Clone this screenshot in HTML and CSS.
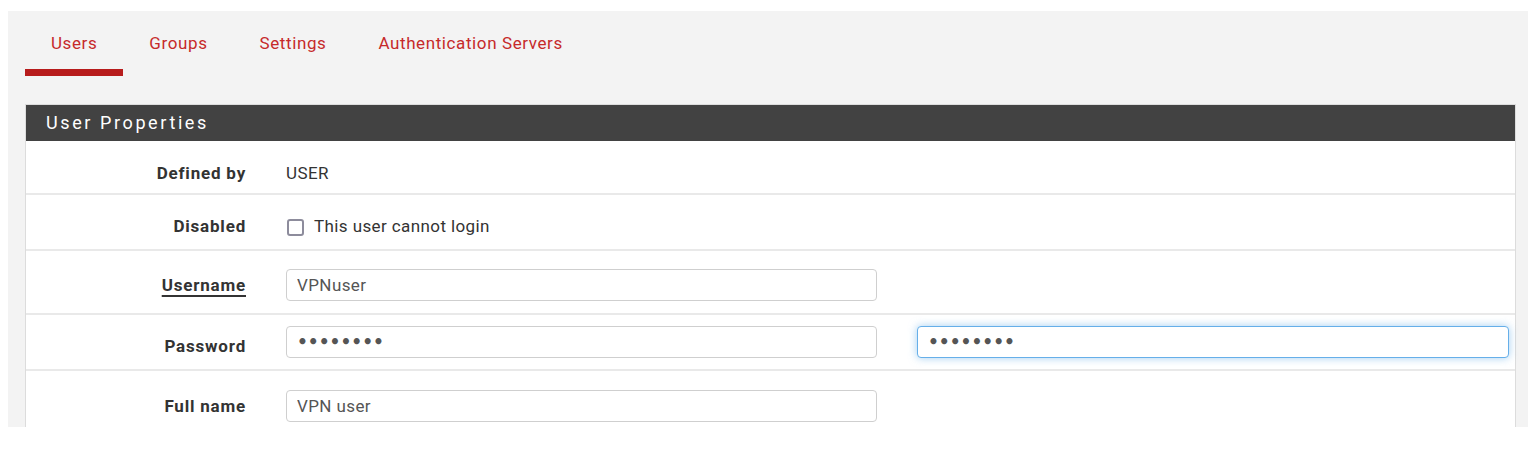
FILE: index.html
```html
<!DOCTYPE html>
<html lang="en">

<head>
    <meta charset="UTF-8">
    <meta name="viewport" content="width=device-width, initial-scale=1.0">
    <title>User Manager / Users / Edit</title>
    <link rel="stylesheet" href="styles.css">
</head>

<body>
    <div class="page">
        <ul class="tabs">
            <li class="active"><a href="#">Users</a></li>
            <li><a href="#">Groups</a></li>
            <li><a href="#">Settings</a></li>
            <li><a href="#">Authentication Servers</a></li>
        </ul>

        <div class="panel">
            <div class="panel-heading">User Properties</div>
            <div class="panel-body">
                <div class="form-row row-defined">
                    <label>Defined by</label>
                    <div class="value">USER</div>
                </div>
                <div class="form-row row-disabled">
                    <label>Disabled</label>
                    <div class="value check">
                        <input type="checkbox" id="disabled">
                        <span>This user cannot login</span>
                    </div>
                </div>
                <div class="form-row row-username">
                    <label class="required">Username</label>
                    <input type="text" value="VPNuser">
                </div>
                <div class="form-row row-password">
                    <label class="low">Password</label>
                    <input type="password" value="12345678">
                    <input type="password" class="focused" value="12345678">
                </div>
                <div class="form-row row-fullname">
                    <label>Full name</label>
                    <input type="text" value="VPN user">
                </div>
            </div>
        </div>
    </div>
</body>

</html>
```

FILE: styles.css
```css
body {
    margin: 0;
    background-color: #fff;
    font-family: Roboto, "Liberation Sans", sans-serif;
    color: #333;
}

.page {
    margin: 11px 8px 0 8px;
    height: 416px;
    overflow: hidden;
    background-color: #f3f3f3;
    padding: 0 12px 0 17px;
}

/* tabs */
.tabs {
    display: flex;
    list-style: none;
    margin: 0;
    padding: 0;
}

.tabs a {
    display: block;
    height: 38px;
    padding: 20px 26px 0 26px;
    font-size: 17px;
    line-height: 24px;
    letter-spacing: 0.6px;
    color: #c62a2a;
    text-decoration: none;
    border-bottom: 7px solid transparent;
}

.tabs .active a {
    border-bottom-color: #b71c1c;
}

/* panel */
.panel {
    margin-top: 28px;
    background-color: #fff;
    border: 1px solid #dcdcdc;
}

.panel-heading {
    height: 36px;
    line-height: 36px;
    padding-left: 20px;
    background-color: #424242;
    color: #fff;
    font-size: 18px;
    letter-spacing: 2.6px;
}

.form-row {
    display: grid;
    grid-template-columns: 220px 591px 592px;
    column-gap: 40px;
    align-items: center;
    border-bottom: 2px solid #e9e9e9;
}

.form-row label {
    text-align: right;
    font-weight: bold;
    font-size: 17px;
    line-height: 20px;
    letter-spacing: 0.8px;
    color: #333;
}

.form-row label.required {
    text-decoration: underline;
    text-underline-offset: 4px;
    text-decoration-thickness: 2px;
}

.form-row label.low {
    margin-top: 8px;
}

.value {
    font-size: 17px;
    line-height: 20px;
    letter-spacing: 0.4px;
    color: #333;
}

.check {
    display: flex;
    align-items: center;
    gap: 10px;
}

.check input {
    appearance: none;
    width: 17px;
    height: 17px;
    margin: 3px 0 0 1px;
    border: 2px solid #8d8c9c;
    border-radius: 3px;
    background: #fff;
}

.form-row input[type="text"],
.form-row input[type="password"] {
    box-sizing: border-box;
    height: 32px;
    padding: 0 10px;
    border: 1px solid #cfcfcf;
    border-radius: 4px;
    font-family: Roboto, "Liberation Sans", sans-serif;
    font-size: 17px;
    letter-spacing: 0.4px;
    color: #555;
    outline: none;
}

.form-row input[type="password"] {
    font-family: "DejaVu Sans", sans-serif;
    font-weight: bold;
    font-size: 17px;
    letter-spacing: 0;
}

.form-row input.focused {
    border-color: #66afe9;
    box-shadow: 0 0 8px rgba(102, 175, 233, 0.6);
}

.row-defined {
    padding: 22px 0 10px 0;
}

.row-disabled {
    padding: 21px 0 13px 0;
}

.row-username {
    padding: 18px 0 12px 0;
}

.row-password {
    padding: 11px 0 11px 0;
}

.row-fullname {
    padding: 19px 0 12px 0;
    border-bottom: none;
}
```
